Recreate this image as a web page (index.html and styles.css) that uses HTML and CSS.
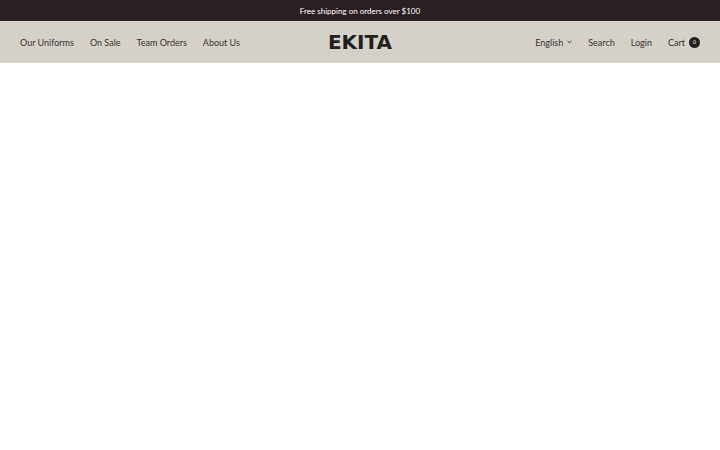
FILE: index.html
```html
<!DOCTYPE html>
<html lang="en">

<head>
    <meta charset="utf-8">
    <meta name="viewport" content="width=device-width, initial-scale=1.0">
    <title>EKITA</title>
    <link rel="stylesheet" href="styles.css">
</head>

<body>
    <!-- announcement bar -->
    <div class="announcement">
        <p>Free shipping on orders over $100</p>
    </div>

    <header class="site-header">
        <nav class="main-nav">
            <a href="#uniforms">Our Uniforms</a>
            <a href="#sale">On Sale</a>
            <a href="#team">Team Orders</a>
            <a href="#about">About Us</a>
        </nav>

        <a href="#home" class="logo">EKITA</a>

        <!-- language, search, account and cart -->
        <nav class="tools">
            <button type="button" class="language">
                English
                <svg class="chevron" viewBox="0 0 10 8" aria-hidden="true">
                    <path d="M1.2 2 5 5.6 8.8 2" />
                </svg>
            </button>
            <a href="#search">Search</a>
            <a href="#login">Login</a>
            <a href="#cart" class="cart">Cart <span class="cart-count">0</span></a>
        </nav>
    </header>

    <main></main>
</body>

</html>
```
FILE: styles.css
```css
body {
    margin: 0;
    background-color: #fff;
    color: #383032;
    font-family: Lato, sans-serif;
    font-size: 9px;
    line-height: 13px;
}

a {
    color: inherit;
    text-decoration: none;
}

.announcement {
    padding: 5px 20px 3px;
    background-color: #2a2024;
    color: #fff;
    font-size: 8px;
    text-align: center;
}

.announcement p {
    margin: 0;
}

/* three columns, so the logo stays in the middle */

.site-header {
    display: grid;
    grid-template-columns: 1fr auto 1fr;
    align-items: center;
    padding: 9px 20px;
    background-color: #d5d1c9;
}

.main-nav,
.tools {
    display: flex;
    align-items: center;
    gap: 16px;
    white-space: nowrap;
}

.tools {
    justify-content: flex-end;
}

.logo {
    color: #231f20;
    font-family: "DejaVu Sans", sans-serif;
    font-size: 20px;
    font-weight: bold;
    line-height: 24px;
}

.language {
    display: flex;
    align-items: center;
    gap: 4px;
    padding: 0;
    border: 0;
    background: none;
    color: inherit;
    font: inherit;
    cursor: pointer;
}

.chevron {
    width: 5px;
    height: 4px;
    fill: none;
    stroke: currentColor;
    stroke-width: 2;
}

.cart {
    display: flex;
    align-items: center;
    gap: 4px;
}

/* round badge with the number of items */

.cart-count {
    width: 11px;
    height: 11px;
    border-radius: 50%;
    background-color: #231f20;
    color: #fff;
    font-size: 5px;
    line-height: 11px;
    text-align: center;
}
```
